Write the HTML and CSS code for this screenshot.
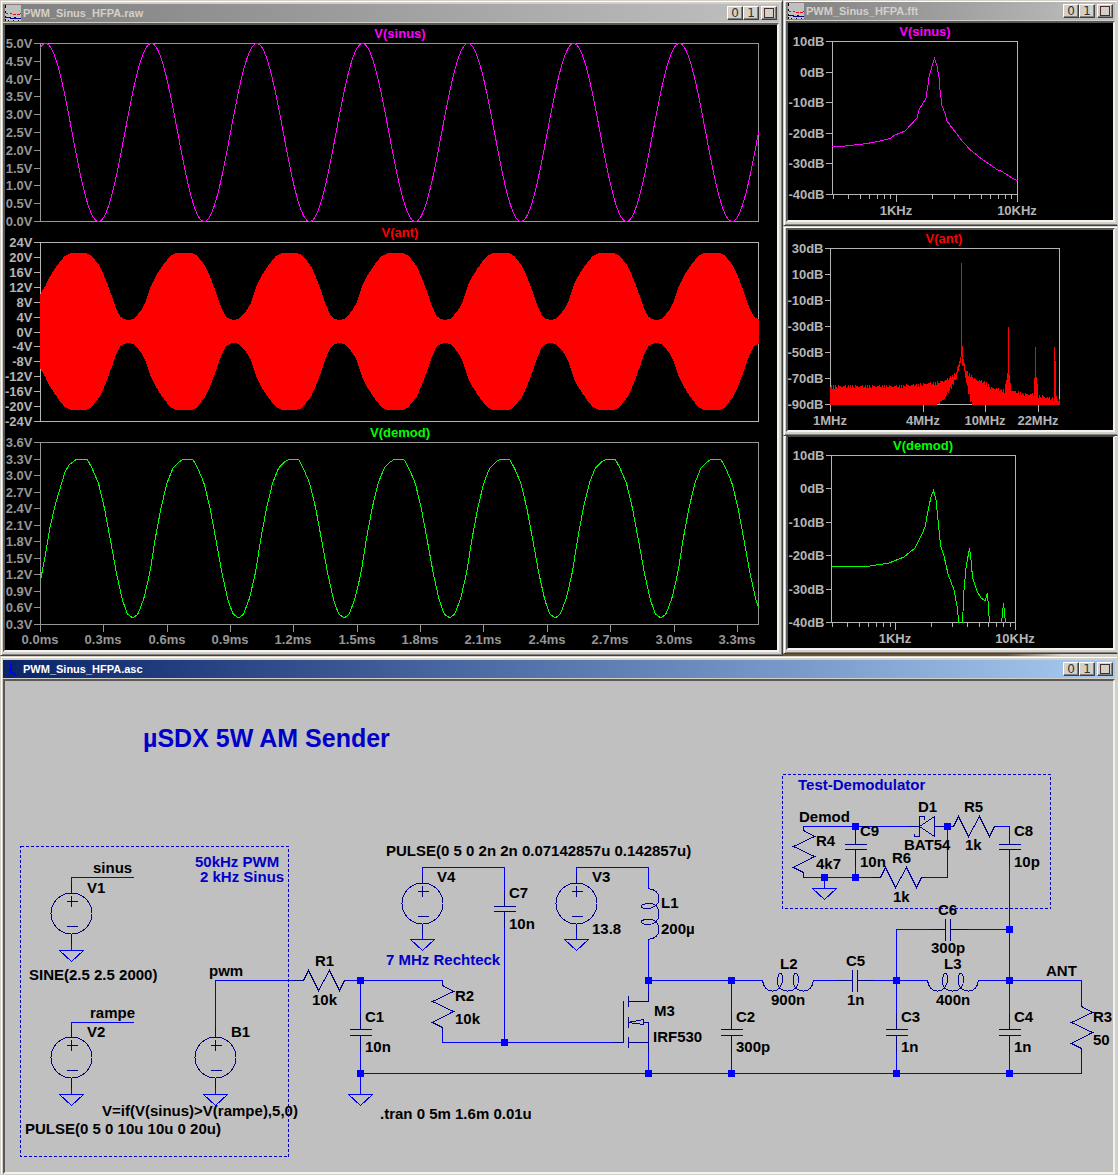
FILE: index.html
```html
<!DOCTYPE html>
<html lang="de">
<head>
<meta charset="utf-8">
<meta name="viewport" content="width=device-width, initial-scale=1">
<title>PWM_Sinus_HFPA</title>
<link rel="stylesheet" href="styles.css">
</head>
<body>
<svg class="sprite" aria-hidden="true">
  <defs>
    <g id="icon-wave">
      <path d="M0 0H16V16H0Z" fill="#c0c0c0"/>
      <path d="M0 0H1V3H0ZM0 6H1V8H0ZM0 11H1V12H0ZM0 14H1V16H0ZM3 15H4V16H3ZM8 15H9V16H8ZM13 15H14V16H13Z" fill="#000"/>
      <path d="M1 8H3V9H1ZM5 8H7V9H5ZM8 9H11V10H8ZM12 9H15V10H12ZM15 8H16V9H15Z" fill="#f00"/>
      <path d="M0 12H6V13H9V12H11V13H16V14H5V13H0Z" fill="#000090"/>
    </g>
    <g id="source">
      <circle r="20.500"/>
      <path d="M0 -31V-20M0 20V31M-5 -12H6M0 -18V-7M-5 13H6"/>
    </g>
    <path id="ground" d="M0 -6V0M-12 0H12L0 11Z"/>
    <path id="res-h" d="M-10 0H0L5 -10L15 10L26 -10L36 10L41 0H46"/>
    <path id="res-v" d="M0 -5V0L11 6L-10 16L11 26L-10 37L0 42V47"/>
    <path id="cap-v" d="M0 -16V0M-11 0H11M-11 6H11M0 6V28"/>
    <path id="cap-s" d="M0 -16V0M-11 0H11M-11 5H11M0 5V27"/>
    <path id="cap-h" d="M-16 0H0M0 -11V11M5 -11V11M5 0H27"/>
    <path id="coil" d="M0 0C1 7 5 10.500 10 10.500C17 10.500 20 4 20 -1C20 -5 19 -7 18 -7C16 -7 15 -4 15 1C15 7 19 10.500 25 10.500C32 10.500 36 6 36 -1C36 -5 35 -7 33 -7C31 -7 31 -4 31 1C31 7 35 10.500 41 10.500C46 10.500 50 7 51 0"/>
  </defs>
</svg>

<main class="desktop">
  <section class="window window--raw">
    <header class="titlebar">
      <svg class="titlebar__icon" viewBox="0 0 16 16" aria-hidden="true"><use href="#icon-wave"/></svg>
      <h2 class="titlebar__name">PWM_Sinus_HFPA.raw</h2>
      <div class="titlebar__controls">
        <button class="control" type="button" aria-label="Minimieren">0</button>
        <button class="control" type="button" aria-label="Maximieren">1</button>
        <button class="control control--close" type="button" aria-label="Schließen"><span class="control__box"></span></button>
      </div>
    </header>
    <div class="client"><svg class="plot" id="plot-raw" viewBox="5 25 772 625"></svg></div>
  </section>

  <div class="spectra">
    <section class="window window--edge window--fft">
      <header class="titlebar">
        <svg class="titlebar__icon" viewBox="0 0 16 16" aria-hidden="true"><use href="#icon-wave"/></svg>
        <h2 class="titlebar__name">PWM_Sinus_HFPA.fft</h2>
        <div class="titlebar__controls">
          <button class="control" type="button" aria-label="Minimieren">0</button>
          <button class="control" type="button" aria-label="Maximieren">1</button>
          <button class="control control--close" type="button" aria-label="Schließen"><span class="control__box"></span></button>
        </div>
      </header>
      <div class="client"><svg class="plot" id="plot-fft-sinus" viewBox="788 23 325 197"></svg></div>
    </section>
    <section class="window window--edge window--fft window--bare">
      <div class="client"><svg class="plot" id="plot-fft-ant" viewBox="788 230 325 200"></svg></div>
    </section>
    <section class="window window--edge window--fft window--tucked">
      <div class="client"><svg class="plot" id="plot-fft-demod" viewBox="788 437 325 211"></svg></div>
    </section>
  </div>

  <section class="window window--edge window--schematic">
    <header class="titlebar titlebar--active">
      <svg class="titlebar__icon" viewBox="0 0 16 16" aria-hidden="true">
        <path d="M2 8H5M11 1L6 6V10L11 14" fill="none" stroke="#00f"/>
        <path d="M5 3H7V13H5ZM12 15L7 14L10 11Z" fill="#00f"/>
      </svg>
      <h2 class="titlebar__name">PWM_Sinus_HFPA.asc</h2>
      <div class="titlebar__controls">
        <button class="control" type="button" aria-label="Minimieren">0</button>
        <button class="control" type="button" aria-label="Maximieren">1</button>
        <button class="control control--close" type="button" aria-label="Schließen"><span class="control__box"></span></button>
      </div>
    </header>
    <div class="client client--sheet">
      <svg class="schematic" viewBox="5 681 1108 491">
        <g class="frame">
          <path d="M20.500 846.500H288.500V1156.500H20.500Z"/>
          <path d="M782.500 774.500H1050.500V908.500H782.500Z"/>
        </g>

        <g class="part">
          <use href="#source" x="71.500" y="913.500"/>
          <use href="#source" x="71.500" y="1057.500"/>
          <use href="#source" x="215.500" y="1057.500"/>
          <use href="#source" x="422.500" y="903.500"/>
          <use href="#source" x="576.500" y="903.500"/>
          <use href="#res-h" x="303.500" y="980.500"/>
          <use href="#res-h" x="953.500" y="826.500"/>
          <use href="#res-h" x="880.500" y="877.500"/>
          <use href="#res-v" x="442.500" y="985.500"/>
          <use href="#res-v" x="803.500" y="830.500"/>
          <use href="#res-v" x="1081.500" y="1006.500"/>
          <use href="#cap-v" x="360.500" y="1029.500"/>
          <use href="#cap-v" x="731.500" y="1029.500"/>
          <use href="#cap-v" x="896.500" y="1029.500"/>
          <use href="#cap-v" x="1009.500" y="1029.500"/>
          <use href="#cap-s" x="504.500" y="906.500"/>
          <use href="#cap-s" x="855.500" y="844.500"/>
          <use href="#cap-s" x="1009.500" y="844.500"/>
          <use href="#cap-h" x="852.500" y="980.500"/>
          <use href="#cap-h" x="945.500" y="929.500"/>
          <use href="#coil" x="762.500" y="980.500"/>
          <use href="#coil" x="927.500" y="980.500"/>
          <use href="#coil" transform="matrix(0 1 1 0 648.500 888.500)"/>
          <path d="M613 1042.500H623.500V1001M628.500 996V1007M628.500 1017V1028M628.500 1037V1048M628 1001.500H648.500V991M628 1042.500H648M628 1022.500L643.500 1019.500V1024.500L628 1022.500M643 1022.500H648.500V1053"/>
          <path d="M909 826.500H919.500M914.500 834V836.500H919.500V816.500H924.500V820M919.500 826.500L934.500 816.500V836.500ZM934 826.500H947"/>
        </g>

        <g class="wire">
          <path d="M134 877.500H71.500V883M71.500 944V950"/>
          <path d="M134 1022.500H71.500V1027M71.500 1088V1094"/>
          <path d="M215.500 1094V1088M215.500 1027V980.500H294"/>
          <path d="M349 980.500H442.500V981M360.500 980V1014M360.500 1052V1094"/>
          <path d="M442.500 1032V1042.500H613M504.500 1042V928"/>
          <path d="M504.500 891V867.500H422.500V873M422.500 934V939"/>
          <path d="M576.500 934V939M576.500 873V867.500H648.500V889M648.500 939V991"/>
          <path d="M360 1073.500H1081.500V1053M648.500 1052V1073"/>
          <path d="M648 980.500H763M731.500 980V1014M731.500 1052V1073"/>
          <path d="M813 980.500H837M874 980.500H928M896.500 1014V929.500H930M967 929.500H1009M896.500 1052V1073"/>
          <path d="M978 980.500H1081.500V1002M1009.500 866V1014M1009.500 1052V1073"/>
          <path d="M803.500 827V826.500H909M855.500 826V830M855.500 866V877"/>
          <path d="M803.500 877.500H871M926 877.500H947.500V826M998 826.500H1009.500V830M824.500 877V889"/>
          <use href="#ground" x="71.500" y="950.500"/>
          <use href="#ground" x="71.500" y="1094.500"/>
          <use href="#ground" x="215.500" y="1094.500"/>
          <use href="#ground" x="360.500" y="1094.500"/>
          <use href="#ground" x="422.500" y="939.500"/>
          <use href="#ground" x="576.500" y="939.500"/>
          <use href="#ground" x="824.500" y="888.500"/>
        </g>

        <path class="node" d="M357 980.500h7M357 1073.500h7M501 1042.500h7M645 980.500h7M728 980.500h7M645 1073.500h7M728 1073.500h7M893 980.500h7M893 1073.500h7M1006 929.500h7M1006 980.500h7M1006 1073.500h7M852 826.500h7M944 826.500h7M821 877.500h7M852 877.500h7"/>

        <g class="label">
          <text x="93" y="873">sinus</text>
          <text x="87" y="893">V1</text>
          <text x="29" y="980">SINE(2.5 2.5 2000)</text>
          <text x="90" y="1018">rampe</text>
          <text x="87" y="1037">V2</text>
          <text x="209" y="976">pwm</text>
          <text x="231" y="1037">B1</text>
          <text x="102" y="1116">V=if(V(sinus)&gt;V(rampe),5,0)</text>
          <text x="25" y="1134">PULSE(0 5 0 10u 10u 0 20u)</text>
          <text x="315" y="966">R1</text>
          <text x="312" y="1005">10k</text>
          <text x="365" y="1022">C1</text>
          <text x="365" y="1052">10n</text>
          <text x="386" y="856">PULSE(0 5 0 2n 2n 0.07142857u 0.142857u)</text>
          <text x="437" y="882">V4</text>
          <text x="509" y="898">C7</text>
          <text x="509" y="929">10n</text>
          <text x="592" y="882">V3</text>
          <text x="592" y="934">13.8</text>
          <text x="661" y="908">L1</text>
          <text x="661" y="934">200µ</text>
          <text x="455" y="1001">R2</text>
          <text x="455" y="1024">10k</text>
          <text x="654" y="1016">M3</text>
          <text x="653" y="1042">IRF530</text>
          <text x="736" y="1022">C2</text>
          <text x="736" y="1052">300p</text>
          <text x="380" y="1119">.tran 0 5m 1.6m 0.01u</text>
          <text x="780" y="969">L2</text>
          <text x="771" y="1005">900n</text>
          <text x="846" y="966">C5</text>
          <text x="847" y="1005">1n</text>
          <text x="938" y="915">C6</text>
          <text x="931" y="953">300p</text>
          <text x="944" y="969">L3</text>
          <text x="936" y="1005">400n</text>
          <text x="901" y="1022">C3</text>
          <text x="901" y="1052">1n</text>
          <text x="1014" y="1022">C4</text>
          <text x="1014" y="1052">1n</text>
          <text x="1046" y="976">ANT</text>
          <text x="1093" y="1022">R3</text>
          <text x="1093" y="1045">50</text>
          <text x="799" y="822">Demod</text>
          <text x="918" y="812">D1</text>
          <text x="904" y="850">BAT54</text>
          <text x="964" y="812">R5</text>
          <text x="965" y="850">1k</text>
          <text x="1014" y="836">C8</text>
          <text x="1014" y="867">10p</text>
          <text x="860" y="836">C9</text>
          <text x="860" y="867">10n</text>
          <text x="816" y="846">R4</text>
          <text x="816" y="869">4k7</text>
          <text x="892" y="863">R6</text>
          <text x="893" y="902">1k</text>
        </g>
        <g class="label label--note">
          <text class="label--heading" x="143" y="747">µSDX 5W AM Sender</text>
          <text x="195" y="867">50kHz PWM</text>
          <text x="200" y="882">2 kHz Sinus</text>
          <text x="386" y="965">7 MHz Rechteck</text>
          <text x="798" y="790">Test-Demodulator</text>
        </g>
      </svg>
    </div>
  </section>
</main>
<script src="plot.js"></script>
</body>
</html>
```

FILE: styles.css
```css
* {
  box-sizing: border-box;
}

body {
  margin: 0;
  background: linear-gradient(90deg, #6b5536 0 90%, #d4d0c8 95%);
  font-family: "Liberation Sans", Arial, sans-serif;
}

.sprite {
  position: absolute;
  width: 0;
  height: 0;
}

.desktop {
  display: grid;
  grid-template-columns: 783fr 335fr;
}

.spectra {
  display: flex;
  flex-direction: column;
}

/* window frame */
.window {
  min-width: 0;
  padding: 3px 3px 3px 2px;
  background: #d4d0c8;
  border: 1px solid;
  border-color: #d4d0c8 #404040 #404040 #d4d0c8;
  box-shadow: inset 1px 1px #fff, inset -1px -1px #808080;
}

.window--edge {
  padding-right: 2px;
  border-right-color: #d4d0c8;
  box-shadow: inset 1px 1px #fff, inset 0 -1px #808080;
}

.window--fft {
  padding-top: 1px;
}

.window--tucked {
  padding-top: 0;
  border-top: 0;
}

.window--schematic {
  grid-column: 1 / -1;
  padding-bottom: 0;
  border-bottom-color: #d4d0c8;
  box-shadow: inset 1px 1px #fff;
}

.titlebar {
  display: flex;
  align-items: center;
  gap: 2px;
  height: 18px;
  margin-bottom: 1px;
  padding: 0 2px;
  background: linear-gradient(90deg, #808080, #c0c0c0);
  color: #d4d0c8;
}

.titlebar--active {
  background: linear-gradient(90deg, #0a246a, #a6caf0);
  color: #fff;
}

.titlebar__icon {
  width: 16px;
  height: 16px;
  shape-rendering: crispEdges;
}

.titlebar__name {
  flex: 1;
  margin: 0;
  font-size: 11px;
  line-height: 18px;
}

.titlebar__controls {
  display: flex;
}

.control {
  display: flex;
  align-items: center;
  justify-content: center;
  width: 16px;
  height: 14px;
  padding: 0;
  background: #d4d0c8;
  border: 1px solid;
  border-color: #fff #404040 #404040 #fff;
  box-shadow: inset -1px -1px #808080;
  color: #333;
  font: 12px/12px "DejaVu Sans", sans-serif;
}

.control--close {
  margin-left: 2px;
}

.control__box {
  width: 10px;
  height: 10px;
  border: 1px solid #4c2a2a;
}

.client {
  background: #000;
  border: 2px solid;
  border-color: #585858 #f4f2ee #f4f2ee #585858;
}

.window--tucked .client {
  border-top: 1px solid #404040;
}

.client--sheet {
  background: #c0c0c0;
}

.plot,
.schematic {
  display: block;
  width: 100%;
  height: auto;
  shape-rendering: crispEdges;
}

/* plots */
.plot text {
  font-size: 13px;
  font-weight: bold;
}

.axis {
  fill: none;
  stroke: #b4b4b4;
}

.tick {
  fill: #b4b4b4;
}

.tick--y {
  text-anchor: end;
}

.tick--x,
.caption {
  text-anchor: middle;
}

.axis--dim {
  stroke: #969696;
}

.tick--dim {
  fill: #969696;
}

.trace {
  fill: none;
}

.trace--sinus {
  stroke: #f0f;
}

.trace--ant {
  fill: #f00;
}

.trace--spike {
  stroke: #f00;
}

.trace--demod {
  stroke: #0f0;
}

.caption--sinus {
  fill: #f0f;
}

.caption--ant {
  fill: #f00;
}

.caption--demod {
  fill: #0f0;
}

/* schematic */
.frame {
  fill: none;
  stroke: #0000c8;
  stroke-dasharray: 3 2;
}

.wire {
  fill: none;
  stroke: #00f;
}

.part {
  fill: none;
  stroke: #000090;
}

.node {
  stroke: #00f;
  stroke-width: 7;
}

.label {
  fill: #000;
  font-size: 15px;
  font-weight: bold;
}

.label--note {
  fill: #0000c8;
}

.label--heading {
  font-size: 25px;
}
```

FILE: plot.js
```js
const SVG = "http://www.w3.org/2000/svg";

function add(parent, name, attrs, text) {
  const el = document.createElementNS(SVG, name);
  for (const key in attrs) el.setAttribute(key, attrs[key]);
  if (text !== undefined) el.textContent = text;
  parent.appendChild(el);
}

// Frame, ticks and labels of one pane.
function pane(svg, o) {
  const dim = o.dim ? "--dim" : "";
  const axis = "axis" + (dim ? " axis" + dim : "");
  const tick = "tick" + (dim ? " tick" + dim : "");
  let d = `M${o.x0} ${o.y0}H${o.x1}V${o.y1}H${o.x0}Z`;
  const step = (o.y1 - o.y0) / (o.labels.length - 1);
  const tickLength = o.tickLength || 7;
  o.labels.forEach((label, i) => {
    const y = Math.floor(o.y0 + i * step) + 0.5;
    d += `M${o.x0 - tickLength} ${y}H${o.x0}`;
    add(svg, "text", { x: o.x0 - tickLength - 1, y: y + 4.5, class: tick + " tick--y" }, label);
  });
  for (const x of o.minor || []) d += `M${Math.floor(x) + 0.5} ${o.y1}v4`;
  for (const [x, label] of o.xTicks || []) {
    d += `M${Math.floor(x) + 0.5} ${o.y1}v7`;
    add(svg, "text", { x: Math.floor(x), y: o.xBase, class: tick + " tick--x" }, label);
  }
  add(svg, "path", { d, class: axis });
  add(svg, "text", { x: o.cx, y: o.y0 - 5.5, class: "caption caption--" + o.signal }, `V(${o.signal})`);
}

const range = (from, to, step, unit, digits) => {
  const out = [];
  for (let i = 0; i <= Math.round((to - from) / step); i++) {
    const v = from + i * step;
    out.push((Math.abs(v) < 1e-9 ? 0 : v).toFixed(digits) + unit);
  }
  return out;
};

const line = pts => "M" + pts.map(p => p.join(" ")).join("L");

function lookup(table, x) {
  for (let i = 1; i < table.length; i++) {
    const [ax, ay] = table[i - 1], [bx, by] = table[i];
    if (x <= bx) return ay + (by - ay) * (x - ax) / (bx - ax);
  }
  return table[table.length - 1][1];
}

const PERIOD = 105.6;
const phase = (x, origin) => (((x - origin) % PERIOD) + PERIOD) % PERIOD;

// Transient signals
const raw = document.getElementById("plot-raw");
pane(raw, { x0: 40.5, x1: 758.5, y0: 43.5, y1: 221.5, dim: true, cx: 400, signal: "sinus",
  labels: range(5, 0, -0.5, "V", 1) });
pane(raw, { x0: 40.5, x1: 758.5, y0: 242.5, y1: 421.5, cx: 400, signal: "ant",
  labels: range(24, -24, -4, "V", 0) });
pane(raw, { x0: 40.5, x1: 758.5, y0: 442.5, y1: 624.5, dim: true, cx: 400, signal: "demod",
  labels: range(3.6, 0.3, -0.3, "V", 1), xBase: 644,
  xTicks: range(0, 3.3, 0.3, "ms", 1).map((label, i) => [40.5 + i * 63.35, label]) });

const sinus = [];
for (let x = 40.5; x <= 758.5; x++)
  sinus.push([x, (132.5 - 89 * Math.cos(2 * Math.PI * (x - 45.7) / PERIOD)).toFixed(1)]);
add(raw, "path", { d: line(sinus), class: "trace trace--sinus" });

const envelope = [[0, 12], [5, 13], [9, 17], [13, 22], [17, 29], [20, 38], [23, 47], [27, 55],
  [32, 63], [37, 70], [42, 76], [46, 78], [48, 79], [63, 79], [66, 78], [69, 76], [77, 66],
  [82, 55], [88, 39], [92, 27], [97, 16], [101, 13], [PERIOD, 12]];
const upper = [], lower = [];
for (let x = 40; x <= 759; x++) {
  const a = x < 45 ? 37 + (x - 40) * 1.8 : lookup(envelope, phase(x, 128.3));
  upper.push([x, (332 - a).toFixed(1)]);
  lower.unshift([x, (331 + a).toFixed(1)]);
}
add(raw, "path", { d: line(upper.concat(lower)) + "Z", class: "trace--ant" });

const demodCycle = [[0, 618], [5, 614], [11, 598], [17, 572], [22, 540], [28, 508], [34, 483],
  [40, 468], [46, 462], [50, 459.5], [60, 459.5], [65, 469], [71, 483], [77, 508], [83, 540],
  [89, 573], [95, 600], [100, 614], [PERIOD, 618]];
const demodStart = [[40, 583], [45, 557], [50, 527], [56, 502], [65, 472], [69, 465], [76, 459.5]];
const demod = [];
for (let x = 40.5; x <= 758.5; x++)
  demod.push([x, (x < 76 ? lookup(demodStart, x) : x < 84 ? 459.5 : lookup(demodCycle, phase(x, 133))).toFixed(1)]);
add(raw, "path", { d: line(demod), class: "trace trace--demod" });

// Spectrum of V(sinus)
const minorTicks = (oneK, decade) =>
  [0.3, 0.4, 0.5, 0.6, 0.7, 0.8, 0.9, 2, 3, 4, 5, 6, 7, 8, 9].map(f => oneK + decade * Math.log10(f));

const fftSinus = document.getElementById("plot-fft-sinus");
pane(fftSinus, { x0: 832.5, x1: 1017.5, y0: 41.5, y1: 194.5, cx: 925, signal: "sinus",
  labels: range(10, -40, -10, "dB", 0), xBase: 215, minor: minorTicks(896.5, 121),
  xTicks: [[896.5, "1KHz"], [1017.5, "10KHz"]] });
add(fftSinus, "path", { class: "trace trace--sinus", d: line([[832.5, 146.5], [845, 146], [867, 143.5],
  [880, 141], [890, 138.5], [895, 135], [905, 131], [917, 118], [919, 110], [926, 98], [928, 85],
  [929, 77], [932, 66], [934.5, 58.5], [937, 66], [939, 77], [940, 90], [942, 106], [945, 113],
  [947, 121], [956, 133], [963, 142], [970, 149.5], [983, 160], [997, 169.5], [1002, 171.5],
  [1012, 178], [1017.5, 181]]) });

// Spectrum of V(ant)
const fftAnt = document.getElementById("plot-fft-ant");
pane(fftAnt, { x0: 830.5, x1: 1059.5, y0: 248.5, y1: 404.5, cx: 944, signal: "ant",
  tickLength: 6, labels: range(30, -90, -20, "dB", 0), xBase: 425,
  xTicks: [[830.5, "1MHz"], [923.5, "4MHz"], [985.5, "10MHz"], [1038.5, "22MHz"]] });
const noiseTop = [[830, 387], [900, 386.5], [920, 385], [935, 383.5], [945, 381], [955, 374],
  [958, 366], [960, 357], [961, 347], [963, 360], [965, 369], [968, 374], [975, 380], [985, 383],
  [990, 388], [1004, 391], [1006, 380], [1008, 365], [1009, 376], [1011, 391], [1025, 395],
  [1033, 395], [1034, 378], [1035, 365], [1036, 375], [1038, 396], [1050, 399], [1053, 399],
  [1054, 350], [1055, 359], [1056, 398], [1059, 401]];
const floorEdge = [[937, 405], [944, 399], [950, 389], [956, 378], [959, 368], [961, 357],
  [963, 367], [967, 388], [970, 400], [972, 405]];
let noise = "";
for (let x = 830; x < 1060; x++) {
  const wobble = ((x * x * 31) % 17) % 5 - 2;
  const y = Math.round(lookup(noiseTop, x) + wobble * 0.8);
  const low = x > 936 && x < 973 ? Math.round(lookup(floorEdge, x) + wobble * 0.8) : 405;
  noise += `M${x}.5 ${y}V${Math.max(y + 1, low)}`;
}
noise += "M961.5 263V350M962.5 346V366M1008.5 327V404M1035.5 347V404M1054.5 347V404";
add(fftAnt, "path", { d: noise, class: "trace trace--spike" });

// Spectrum of V(demod)
const fftDemod = document.getElementById("plot-fft-demod");
pane(fftDemod, { x0: 831.5, x1: 1015.5, y0: 455.5, y1: 622.5, cx: 923, signal: "demod",
  labels: range(10, -40, -10, "dB", 0), xBase: 643, minor: minorTicks(895.5, 120),
  tickLength: 6, xTicks: [[895.5, "1KHz"], [1015.5, "10KHz"]] });
add(fftDemod, "path", { class: "trace trace--demod", d:
  line([[831.5, 566.5], [867, 566.5], [889, 563], [904, 557], [915, 548], [922, 534], [925, 527],
    [929, 506], [931, 497], [933.5, 490.5], [936, 500], [938, 520], [940, 540], [941, 547],
    [944, 556], [948, 574], [954, 590], [957, 606], [959, 623]]) +
  line([[962.5, 623], [964, 590], [966, 568], [969.5, 548], [971, 560], [972.5, 577], [977, 591],
    [981, 598], [985, 601], [987.5, 593], [989.5, 623]]) +
  line([[1001.5, 623], [1003.5, 603], [1005.5, 623]]) });
```
